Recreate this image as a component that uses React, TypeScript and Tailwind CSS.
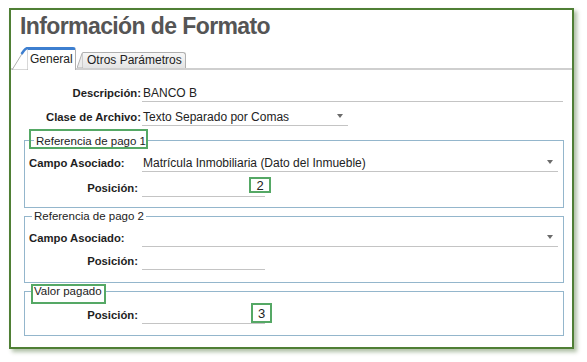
import React from "react";

const Arrow = () => (
  <svg width="6" height="4" viewBox="0 0 6 4" className="absolute right-[5px] top-[4px]">
    <path d="M0 0H6L3 4Z" fill="#6b6b6b" />
  </svg>
);

const Value = ({ w, children, arrow }: { w: string; children?: React.ReactNode; arrow?: boolean }) => (
  <div className={`relative h-[16px] border-b border-[#c4c4c4] pl-[1px] text-[12px] leading-[15px] text-[#222] ${w}`}>
    {children}
    {arrow && <Arrow />}
  </div>
);

const Mark = ({ className, children }: { className: string; children?: React.ReactNode }) => (
  <div
    className={`pointer-events-none absolute flex items-center justify-center border-2 border-[#55a865] text-[13px] leading-none text-[#222] ${className}`}
  >
    {children}
  </div>
);

const Legend = ({ className, children }: { className: string; children: React.ReactNode }) => (
  <span className={`absolute bg-white px-[2px] text-[11.5px] leading-[14px] text-[#222] ${className}`}>{children}</span>
);

const label = "text-[11.3px] font-bold leading-[15px] text-[#1e1e1e]";

export default function App() {
  return (
    <div className="min-h-[362px] bg-white pl-[9px] pt-[8px] font-['Liberation_Sans',Arial,sans-serif]">
      <div className="h-[341px] w-[565px] border-2 border-[#4f7f35] bg-white shadow-[3px_3px_4px_rgba(80,115,60,0.45)]">
        <h1 className="mt-[3px] pl-[9px] text-[23px] font-bold leading-[26px] tracking-[-0.6px] text-[#555]">
          Información de Formato
        </h1>

        {/* tabs */}
        <div className="mt-[8px] flex h-[23px] items-end border-b-2 border-[#cfcfcf] pl-[1px]">
          <div className="relative -mb-[2px] flex h-[23px] items-start">
            <svg width="16" height="23" viewBox="0 0 16 23" className="block">
              <path d="M0 23 L12 3.5 Q14 0.5 16 0.5 V23 Z" fill="#fff" stroke="#b0b0b0" strokeWidth="1" />
              <path d="M9.5 7 L12 3.5 Q14 1 16 1" fill="none" stroke="#3d7fd0" strokeWidth="2.5" />
            </svg>
            <div className="h-[23px] w-[48px] rounded-tr-[3px] border-r border-t-[3px] border-r-[#b0b0b0] border-t-[#3d7fd0] bg-white pl-[2px] text-[12px] leading-[18px] text-[#222]">
              General
            </div>
          </div>
          <div className="ml-[1px] flex h-[16px] items-start">
            <svg width="6" height="16" viewBox="0 0 6 16" className="block">
              <path d="M0 16 L5 1.5 Q5.5 0.5 6 0.5 V16 Z" fill="#ececec" stroke="#b0b0b0" strokeWidth="1" />
            </svg>
            <div className="h-[16px] w-[103px] rounded-tr-[3px] border-r border-t border-[#b0b0b0] bg-gradient-to-b from-[#f7f7f7] to-[#e4e4e4] pl-[4px] text-[12px] leading-[14px] text-[#222]">
              Otros Parámetros
            </div>
          </div>
        </div>

        {/* main fields */}
        <div className="mt-[16px] flex">
          <div className={`mr-[1px] w-[130px] text-right ${label}`}>Descripción:</div>
          <Value w="w-[421px]">BANCO B</Value>
        </div>
        <div className="mt-[8px] flex">
          <div className={`mr-[1px] w-[130px] text-right ${label}`}>Clase de Archivo:</div>
          <Value w="w-[206px]" arrow>
            Texto Separado por Comas
          </Value>
        </div>

        {/* Referencia de pago 1 */}
        <div className="relative ml-[13px] mt-[14px] w-[540px] border border-[#94b6cc] pb-[10px] pt-[15px]">
          <Legend className="left-[9px] top-[-7px]">Referencia de pago 1</Legend>
          <Mark className="left-[4px] top-[-12px] h-[20px] w-[119px]" />
          <div className="flex">
            <div className={`w-[117px] pl-[4px] ${label}`}>Campo Asociado:</div>
            <Value w="w-[416px]" arrow>
              Matrícula Inmobiliaria (Dato del Inmueble)
            </Value>
          </div>
          <div className="mt-[9px] flex">
            <div className={`mr-[4px] w-[113px] text-right ${label}`}>Posición:</div>
            <div className="relative">
              <Value w="w-[123px]" />
              <Mark className="left-[107px] top-[-4px] h-[16px] w-[22px]">2</Mark>
            </div>
          </div>
        </div>

        {/* Referencia de pago 2 */}
        <div className="relative ml-[13px] mt-[8px] w-[540px] border border-[#94b6cc] pb-[12px] pt-[14px]">
          <Legend className="left-[7px] top-[-8px]">Referencia de pago 2</Legend>
          <div className="flex">
            <div className={`w-[117px] pl-[4px] ${label}`}>Campo Asociado:</div>
            <Value w="w-[416px]" arrow />
          </div>
          <div className="mt-[7px] flex">
            <div className={`mr-[4px] w-[113px] text-right ${label}`}>Posición:</div>
            <Value w="w-[123px]" />
          </div>
        </div>

        {/* Valor pagado */}
        <div className="relative ml-[13px] mt-[8px] w-[540px] border border-[#94b6cc] pb-[11px] pt-[16px]">
          <Legend className="left-[7px] top-[-8px]">Valor pagado</Legend>
          <Mark className="left-[6px] top-[-8px] h-[20px] w-[75px]" />
          <div className="flex">
            <div className={`mr-[4px] w-[113px] text-right ${label}`}>Posición:</div>
            <div className="relative">
              <Value w="w-[123px]" />
              <Mark className="left-[109px] top-[-5px] h-[20px] w-[21px]">3</Mark>
            </div>
          </div>
        </div>
      </div>
    </div>
  );
}
